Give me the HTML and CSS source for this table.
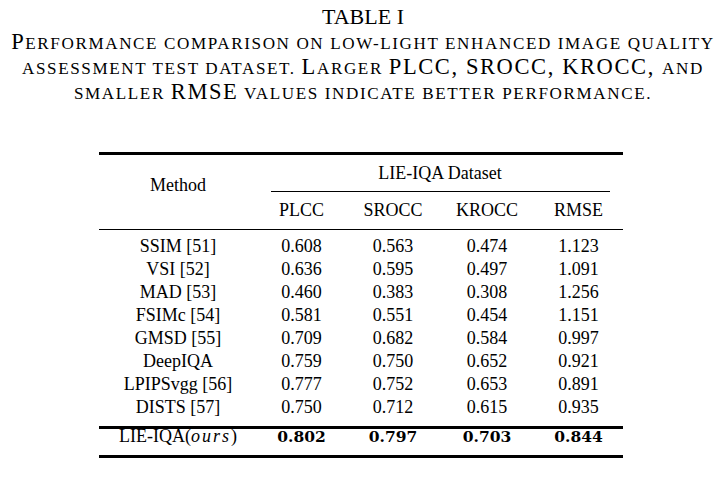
FILE: index.html
```html
<!DOCTYPE html>
<html lang="en">
<head>
<meta charset="utf-8">
<title>TABLE I</title>
<link rel="stylesheet" href="styles.css">
</head>
<body>
<div class="page">
  <div class="title">TABLE I</div>
  <div class="caption">
    <div class="cap-line">P<span class="sc">erformance comparison on low-light enhanced image quality</span></div>
    <div class="cap-line"><span class="sc">assessment test dataset. </span>L<span class="sc">arger </span>PLCC, SROCC, KROCC, <span class="sc">and</span></div>
    <div class="cap-line"><span class="sc">smaller </span>RMSE<span class="sc"> values indicate better performance.</span></div>
  </div>
  <table class="results">
    <colgroup>
      <col class="c-method">
      <col class="c-a">
      <col class="c-b">
      <col class="c-b">
      <col class="c-a">
    </colgroup>
    <thead>
      <tr class="group-row">
        <th rowspan="2" class="method-head">Method</th>
        <th colspan="4" class="group-head"><span class="group-label">LIE-IQA Dataset</span><div class="cmidrule"></div></th>
      </tr>
      <tr class="metrics">
        <th>PLCC</th><th>SROCC</th><th>KROCC</th><th>RMSE</th>
      </tr>
    </thead>
    <tbody class="main">
      <tr class="first"><td>SSIM [51]</td><td>0.608</td><td>0.563</td><td>0.474</td><td>1.123</td></tr>
      <tr><td>VSI [52]</td><td>0.636</td><td>0.595</td><td>0.497</td><td>1.091</td></tr>
      <tr><td>MAD [53]</td><td>0.460</td><td>0.383</td><td>0.308</td><td>1.256</td></tr>
      <tr><td>FSIMc [54]</td><td>0.581</td><td>0.551</td><td>0.454</td><td>1.151</td></tr>
      <tr><td>GMSD [55]</td><td>0.709</td><td>0.682</td><td>0.584</td><td>0.997</td></tr>
      <tr><td>DeepIQA</td><td>0.759</td><td>0.750</td><td>0.652</td><td>0.921</td></tr>
      <tr><td>LPIPSvgg [56]</td><td>0.777</td><td>0.752</td><td>0.653</td><td>0.891</td></tr>
      <tr class="last"><td>DISTS [57]</td><td>0.750</td><td>0.712</td><td>0.615</td><td>0.935</td></tr>
    </tbody>
    <tbody class="ours">
      <tr>
        <td>LIE-IQA(<span class="math-it">ours</span>)</td>
        <td><span class="bold">0.802</span></td>
        <td><span class="bold">0.797</span></td>
        <td><span class="bold">0.703</span></td>
        <td><span class="bold">0.844</span></td>
      </tr>
    </tbody>
  </table>
</div>
</body>
</html>
```
FILE: styles.css
```css
html, body {
  margin: 0;
  padding: 0;
  background: #ffffff;
}

body {
  color: #000000;
  font-family: "Liberation Serif", "Times New Roman", serif;
}

.title {
  text-align: center;
  font-size: 22px;
  line-height: 25px;
  padding-top: 4px;
}

.caption {
  text-align: center;
  font-size: 22.5px;
  line-height: 25px;
  letter-spacing: 1.6px;
}

.cap-line {
  white-space: nowrap;
  height: 25px;
}

.sc {
  font-size: 0.76em;
  line-height: 1;
  text-transform: uppercase;
}

.results {
  margin: 48px 0 0 99px;
  width: 524px;
  table-layout: fixed;
  border-collapse: separate;
  border-spacing: 0;
  font-size: 18px;
  line-height: 23px;
}

.c-method { width: 158px; }
.c-a { width: 89px; }
.c-b { width: 94px; }

.results th,
.results td {
  padding: 0;
  text-align: center;
  vertical-align: top;
  font-weight: normal;
  white-space: nowrap;
}

.group-row th {
  border-top: 3px solid #000;
}

.method-head {
  padding-top: 19px !important;
  border-bottom: 1px solid #000;
}

.group-head {
  padding-top: 7px !important;
}

.group-label {
  display: block;
}

.cmidrule {
  margin: 6px 13px 0 14px;
  border-top: 1px solid #000;
}

.metrics th {
  padding: 7px 0 !important;
  border-bottom: 1px solid #000;
}

.main tr.first td {
  padding-top: 5px;
}

.main tr.last td {
  padding-bottom: 7px;
}

.ours td {
  border-top: 3px solid #000;
  border-bottom: 3px solid #000;
  line-height: 15px;
  padding-bottom: 11px;
}

.bold {
  font-family: "DejaVu Serif", serif;
  font-weight: bold;
  font-size: 15.5px;
}

.math-it {
  font-style: italic;
  letter-spacing: 2px;
}
```
